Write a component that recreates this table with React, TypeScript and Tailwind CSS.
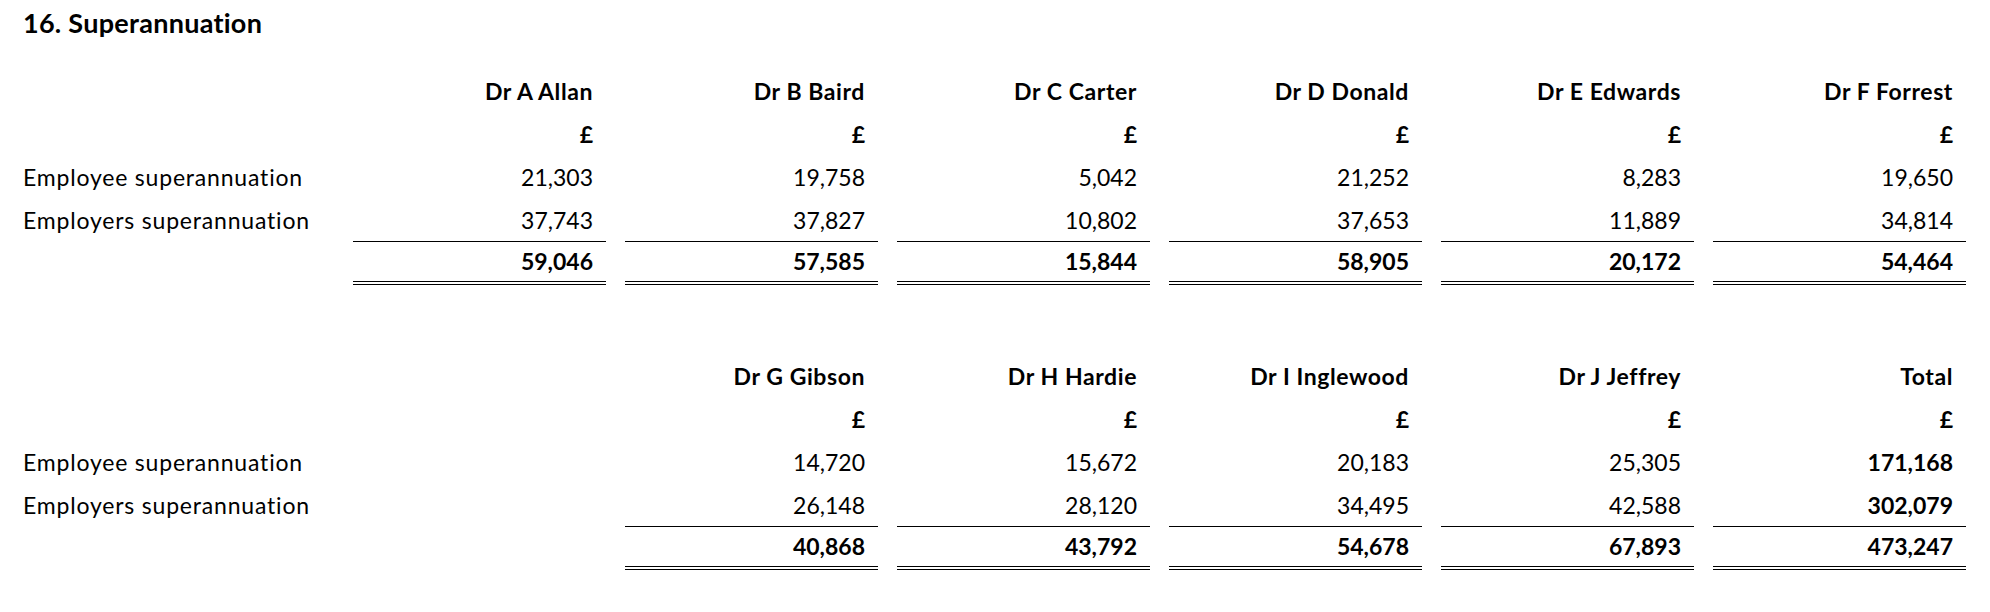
import clsx from 'clsx'

type Col = { name: string; values: [string, string, string]; bold?: boolean }

const firstBlock: Col[] = [
  { name: 'Dr A Allan', values: ['21,303', '37,743', '59,046'] },
  { name: 'Dr B Baird', values: ['19,758', '37,827', '57,585'] },
  { name: 'Dr C Carter', values: ['5,042', '10,802', '15,844'] },
  { name: 'Dr D Donald', values: ['21,252', '37,653', '58,905'] },
  { name: 'Dr E Edwards', values: ['8,283', '11,889', '20,172'] },
  { name: 'Dr F Forrest', values: ['19,650', '34,814', '54,464'] },
]

const secondBlock: Col[] = [
  { name: 'Dr G Gibson', values: ['14,720', '26,148', '40,868'] },
  { name: 'Dr H Hardie', values: ['15,672', '28,120', '43,792'] },
  { name: 'Dr I Inglewood', values: ['20,183', '34,495', '54,678'] },
  { name: 'Dr J Jeffrey', values: ['25,305', '42,588', '67,893'] },
  { name: 'Total', values: ['171,168', '302,079', '473,247'], bold: true },
]

function Cell({ children, bold, head, line }: { children?: React.ReactNode; bold?: boolean; head?: boolean; line?: 'single' | 'double' }) {
  return (
    <div className="pl-[19px]">
      <div
        className={clsx(
          'h-[43px] flex items-center justify-end pr-[13px]',
          bold && 'font-bold',
          head && 'tracking-[0.025em]',
          line === 'single' && 'border-b border-black',
          line === 'double' && 'border-b-4 border-double border-black'
        )}
      >
        {children}
      </div>
    </div>
  )
}

function Label({ children }: { children?: React.ReactNode }) {
  return <div className="h-[43px] flex items-center tracking-[0.035em]">{children}</div>
}

function Block({ cols, skipFirst }: { cols: Col[]; skipFirst?: boolean }) {
  return (
    <div className="grid grid-cols-[311px_repeat(6,272px)] grid-flow-col grid-rows-5">
      {/* labels */}
      <Label />
      <Label />
      <Label>Employee superannuation</Label>
      <Label>Employers superannuation</Label>
      <Label />

      {skipFirst && (
        <>
          <div /><div /><div /><div /><div />
        </>
      )}

      {cols.map(c => (
        <div key={c.name} className="contents">
          <Cell bold head>{c.name}</Cell>
          <Cell bold>£</Cell>
          <Cell bold={c.bold}>{c.values[0]}</Cell>
          <Cell bold={c.bold} line="single">{c.values[1]}</Cell>
          <Cell bold line="double">{c.values[2]}</Cell>
        </div>
      ))}
    </div>
  )
}

export default function App() {
  return (
    <div className="w-[1990px] h-[612px] bg-white text-black pl-[23px] font-['Lato',_'Liberation_Sans',_sans-serif] text-[23px] [font-variant-ligatures:none]">
      <div className="pt-[8px] text-[27px] leading-[30px] font-bold tracking-[0.01em]">16. Superannuation</div>

      <div className="mt-[32px]">
        <Block cols={firstBlock} />
      </div>

      <div className="mt-[70px]">
        <Block cols={secondBlock} skipFirst />
      </div>
    </div>
  )
}
